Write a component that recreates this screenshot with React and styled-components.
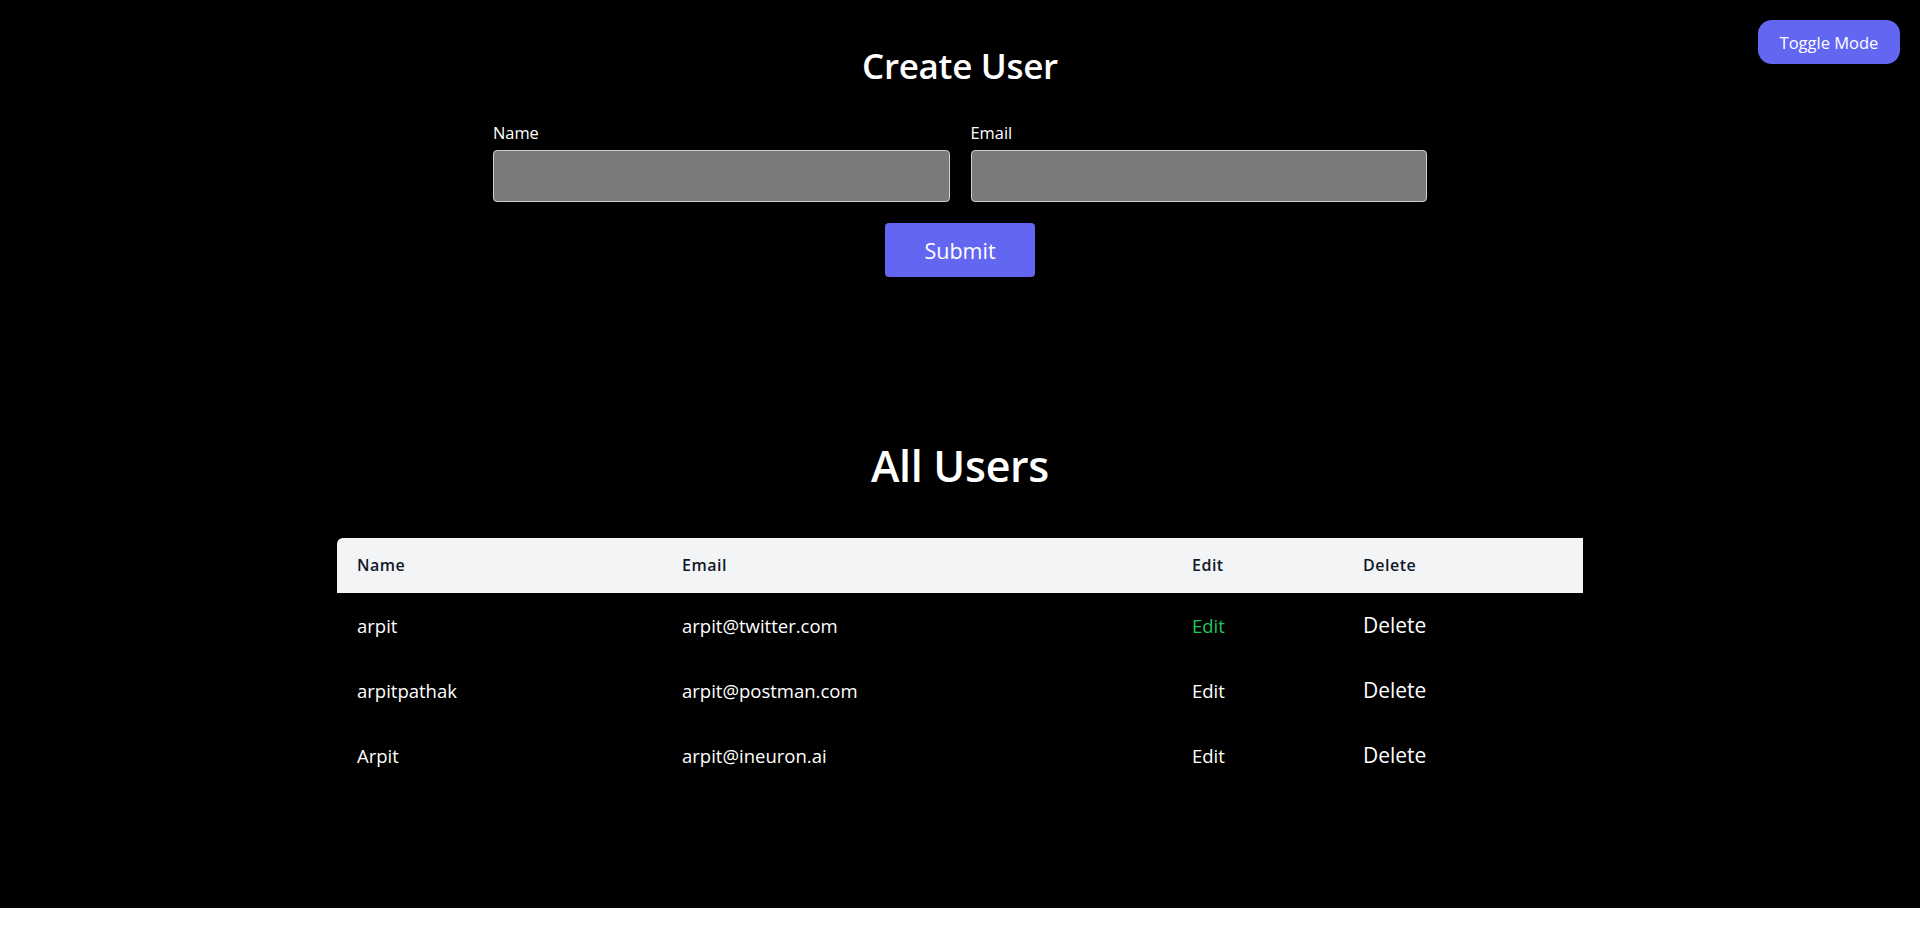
import React from "react";
import styled, { createGlobalStyle } from "styled-components";

const Global = createGlobalStyle`
  html, body { margin: 0; padding: 0; background: #ffffff; }
  body { font-family: "Open Sans", "Noto Sans", sans-serif; }
  * { box-sizing: border-box; }
`;

const Page = styled.div`
  position: relative;
  background: #000;
  color: #fff;
  height: 908px;
  padding-top: 45px;
`;

const ToggleButton = styled.button`
  position: absolute;
  top: 20px;
  right: 20px;
  width: 142px;
  height: 44px;
  border: none;
  border-radius: 14px;
  background: #6366f1;
  color: #fff;
  font-family: inherit;
  font-size: 16.5px;
  cursor: pointer;
`;

const FormSection = styled.section`
  width: 934px;
  margin: 0 auto;
  display: flex;
  flex-direction: column;
  align-items: center;
`;

const Title = styled.h1`
  margin: 0;
  font-weight: 600;
  font-size: ${(p) => p.$size}px;
  line-height: 1.2;
  letter-spacing: -0.3px;
  text-align: center;
`;

const Fields = styled.div`
  width: 100%;
  display: grid;
  grid-template-columns: 1fr 1fr;
  column-gap: 21px;
  margin-top: 36px;
`;

const Field = styled.div`
  display: flex;
  flex-direction: column;
`;

const Label = styled.label`
  font-size: 16.4px;
  line-height: 20px;
  margin-bottom: 7px;
`;

const Input = styled.input`
  height: 52px;
  background: #7a7a7a;
  border: 1px solid #cfcfcf;
  border-radius: 4px;
  color: #fff;
  font-size: 16px;
  padding: 0 12px;
  outline: none;
`;

const SubmitButton = styled.button`
  margin-top: 21px;
  width: 150px;
  height: 54px;
  background: #6366f1;
  color: #fff;
  border: none;
  border-radius: 4px;
  font-family: inherit;
  font-size: 21.5px;
  cursor: pointer;
`;

const UsersSection = styled.section`
  margin-top: 163px;
  display: flex;
  flex-direction: column;
  align-items: center;
`;

const Table = styled.table`
  width: 1246px;
  margin-top: 46px;
  border-collapse: collapse;
  table-layout: fixed;
`;

const HeadRow = styled.tr`
  background: #f3f4f6;
  height: 55px;
`;

const Th = styled.th`
  text-align: left;
  font-weight: 600;
  font-size: 16px;
  letter-spacing: 0.5px;
  color: #111827;
  padding: 0 0 0 20px;
  width: ${(p) => p.$w}px;
  &:first-child { border-top-left-radius: 6px; }
`;

const Row = styled.tr`
  height: 65px;
`;

const Td = styled.td`
  padding: 0 0 0 20px;
  font-size: ${(p) => (p.$big ? 21 : 18.5)}px;
  color: ${(p) => (p.$green ? "#22c55e" : "#fff")};
`;

const users = [
  { name: "arpit", email: "arpit@twitter.com", active: true },
  { name: "arpitpathak", email: "arpit@postman.com" },
  { name: "Arpit", email: "arpit@ineuron.ai" },
];

export default function App() {
  return (
    <>
      <Global />
      <Page>
        <ToggleButton>Toggle Mode</ToggleButton>
        <FormSection>
          <Title $size={35}>Create User</Title>
          <Fields>
            <Field>
              <Label>Name</Label>
              <Input />
            </Field>
            <Field>
              <Label>Email</Label>
              <Input />
            </Field>
          </Fields>
          <SubmitButton>Submit</SubmitButton>
        </FormSection>
        <UsersSection>
          <Title $size={43}>All Users</Title>
          <Table>
            <thead>
              <HeadRow>
                <Th $w={325}>Name</Th>
                <Th $w={510}>Email</Th>
                <Th $w={171}>Edit</Th>
                <Th $w={240}>Delete</Th>
              </HeadRow>
            </thead>
            <tbody>
              {users.map((u) => (
                <Row key={u.email}>
                  <Td>{u.name}</Td>
                  <Td>{u.email}</Td>
                  <Td $green={u.active}>Edit</Td>
                  <Td $big>Delete</Td>
                </Row>
              ))}
            </tbody>
          </Table>
        </UsersSection>
      </Page>
    </>
  );
}
